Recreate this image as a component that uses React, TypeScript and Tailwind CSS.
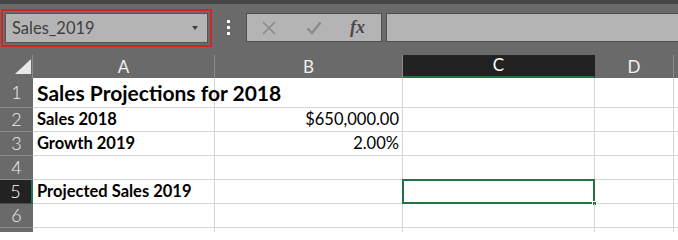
import React from "react"

const font = { fontFamily: "Lato, 'Open Sans', sans-serif" }

const columns = [
  { id: "A", width: "w-[182px]" },
  { id: "B", width: "w-[188px]" },
  { id: "C", width: "w-[192px]" },
  { id: "D", width: "w-[79px]" },
]

const rows = [
  { n: 1, h: "h-[30px]", a: "Sales Projections for 2018", b: "", big: true },
  { n: 2, h: "h-[24px]", a: "Sales 2018", b: "$650,000.00" },
  { n: 3, h: "h-[24px]", a: "Growth 2019", b: "2.00%" },
  { n: 4, h: "h-[24px]", a: "", b: "" },
  { n: 5, h: "h-[24px]", a: "Projected Sales 2019", b: "" },
  { n: 6, h: "h-[24px]", a: "", b: "" },
  { n: 7, h: "h-[24px]", a: "", b: "" },
]

function FormulaBar() {
  return (
    <div className="flex h-[55px] items-start bg-[#6a6a6a] border-t-4 border-[#474747] pt-[5px] pl-[1px]">
      <div className="w-[211px] h-[38px] border-2 border-[#d42424] p-[2px]">
        <div className="flex h-full items-center justify-between bg-[#b4b4b4] border border-[#555] pl-[6px] pr-[9px]">
          <span className="text-[16.5px] text-[#3f3f3f]">Sales_2019</span>
          <span className="w-0 h-0 border-l-[3.5px] border-r-[3.5px] border-t-[4px] border-l-transparent border-r-transparent border-t-[#3f3f3f]" />
        </div>
      </div>
      <div className="flex flex-col gap-[3px] ml-[15px] mt-[11px]">
        <span className="w-[3px] h-[3px] bg-white" />
        <span className="w-[3px] h-[3px] bg-white" />
        <span className="w-[3px] h-[3px] bg-white" />
      </div>
      <div className="flex items-center ml-[16px] mt-[4px] w-[136px] h-[29px] bg-[#b4b4b4] border border-[#4f4f4f]">
        <svg className="ml-[15px]" width="14" height="14" viewBox="0 0 14 14">
          <path d="M1 1 L13 13 M13 1 L1 13" stroke="#8a8a8a" strokeWidth="1.6" />
        </svg>
        <svg className="ml-[30px]" width="16" height="14" viewBox="0 0 16 14">
          <path d="M1.5 7.5 L6 12 L14.5 1.5" stroke="#8a8a8a" strokeWidth="2.4" fill="none" />
        </svg>
        <span
          className="ml-[28px] text-[18px] font-bold italic text-[#4a4a4a]"
          style={{ fontFamily: "'Liberation Serif', serif" }}
        >
          fx
        </span>
      </div>
      <div className="flex-1 ml-[4px] mt-[4px] h-[29px] bg-[#b4b4b4] border-y border-l border-[#4f4f4f]" />
    </div>
  )
}

function HeaderRow() {
  return (
    <div className="flex h-[23px] bg-[#6a6a6a]">
      <div className="relative w-[33px] border-r border-[#8c8c8c]">
        <svg className="absolute left-[14px] top-[4px]" width="18" height="16" viewBox="0 0 18 16">
          <path d="M17 0 L17 15 L1 15 Z" fill="#e8e8e8" />
        </svg>
      </div>
      {columns.map((c) => (
        <div
          key={c.id}
          className={`${c.width} flex items-end justify-center text-[17px] leading-[22px] border-r ${
            c.id === "C"
              ? "bg-[#222222] text-white border-[#222222] border-b-2 border-b-[#217346]"
              : "text-[#f0f0f0] border-[#8c8c8c]"
          }`}
        >
          {c.id}
        </div>
      ))}
      <div className="flex-1" />
    </div>
  )
}

export default function App() {
  return (
    <div className="w-[678px] h-[232px] overflow-hidden bg-white" style={font}>
      <FormulaBar />
      <HeaderRow />
      {rows.map((r) => (
        <div key={r.n} className={`flex ${r.h}`}>
          <div
            className={`w-[33px] flex items-center justify-center text-[18px] font-light border-b ${
              r.n === 5
                ? "bg-[#222222] text-white border-[#4a4a4a] border-r-2 border-r-[#217346]"
                : "bg-[#6a6a6a] text-[#eeeeee] border-[#8c8c8c]"
            }`}
          >
            {r.n < 7 ? r.n : ""}
          </div>
          <div
            className={`w-[182px] flex items-center pl-[4px] font-bold text-black border-r border-b border-[#d4d4d4] whitespace-nowrap ${
              r.big ? "text-[21px]" : "text-[16.5px]"
            }`}
          >
            {r.a}
          </div>
          <div className="w-[188px] flex items-center justify-end pr-[3px] text-[16.5px] text-black border-r border-b border-[#d4d4d4]">
            {r.b}
          </div>
          <div className="relative w-[192px] border-r border-b border-[#d4d4d4]">
            {r.n === 5 && (
              <div className="absolute -left-[1px] -top-[1px] w-[193px] h-[25px] border-2 border-[#217346]">
                <span className="absolute -right-[4px] -bottom-[4px] w-[5px] h-[5px] bg-[#217346] border border-white" />
              </div>
            )}
          </div>
          <div className="w-[79px] border-r border-b border-[#d4d4d4]" />
          <div className="flex-1 border-b border-[#d4d4d4]" />
        </div>
      ))}
    </div>
  )
}
